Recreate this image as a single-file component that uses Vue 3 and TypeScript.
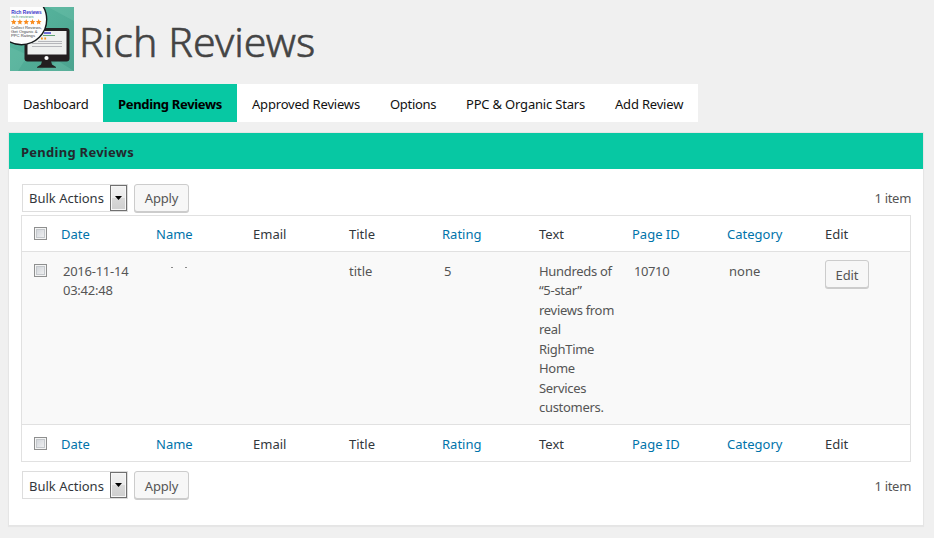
<script setup lang="ts">
interface Tab { label: string; active?: boolean; key: string }
interface Column { label: string; key: string; sortable?: boolean }

const tabs: Tab[] = [
  { label: 'Dashboard', key: 'dashboard' },
  { label: 'Pending Reviews', key: 'pending', active: true },
  { label: 'Approved Reviews', key: 'approved' },
  { label: 'Options', key: 'options' },
  { label: 'PPC & Organic Stars', key: 'ppc' },
  { label: 'Add Review', key: 'add' },
]
const columns: Column[] = [
  { label: 'Date', key: 'date', sortable: true },
  { label: 'Name', key: 'name', sortable: true },
  { label: 'Email', key: 'email' },
  { label: 'Title', key: 'title' },
  { label: 'Rating', key: 'rating', sortable: true },
  { label: 'Text', key: 'text' },
  { label: 'Page ID', key: 'page', sortable: true },
  { label: 'Category', key: 'category', sortable: true },
  { label: 'Edit', key: 'edit' },
]
const sections = ['top', 'bottom'] as const
const starXs = [3.7, 9.9, 16.2, 22.5, 28.7]
</script>

<template>
  <div class="page">
    <header class="brand">
      <svg class="logo" width="64" height="64" viewBox="0 0 64 64">
        <defs>
          <linearGradient id="bg" x1="0" y1="0" x2="1" y2="1">
            <stop offset="0" stop-color="#59b8a0" />
            <stop offset="1" stop-color="#4ba38f" />
          </linearGradient>
          <clipPath id="frame"><rect width="64" height="64" /></clipPath>
        </defs>
        <g clip-path="url(#frame)">
          <rect width="64" height="64" fill="url(#bg)" />
          <path d="M38 0L64 14V0ZM0 40L18 48L8 64H0ZM28 64L48 54L64 64Z" fill="#72c6b0" opacity=".35" />
          <rect x="14.500" y="21" width="45" height="33.500" rx="3" fill="#231f20" />
          <rect x="17.500" y="24" width="39" height="23.500" fill="#eef0ef" />
          <path d="M32 54h9l1 3.500 4 2.500v.7H27v-.7l4-2.500z" fill="#231f20" />
          <circle cx="36.500" cy="51" r="2.100" fill="#fff" />
          <path d="M34 26h7" stroke="#2b28c8" stroke-width="1.300" />
          <path d="M33 28.500h12" stroke="#62a575" stroke-width="1" />
          <path d="M31 31.500h1.800m1.500 0h1.800" stroke="#f7941d" stroke-width="1.800" />
          <path d="M28 34.500h24M22 36.500h30M22 39.500h30" stroke="#aeb0b4" stroke-width=".9" />
          <circle cx="11.500" cy="12.500" r="25.200" fill="#fdfdfd" stroke="#15191b" stroke-width="1.400" />
          <text x="1.200" y="7" class="logo-name" textLength="30.500" lengthAdjust="spacingAndGlyphs">Rich Reviews</text>
          <text x="1.500" y="10.900" class="logo-sub" textLength="22" lengthAdjust="spacingAndGlyphs">rich reviews</text>
          <path
            v-for="x in starXs"
            :key="x"
            :transform="`translate(${x} 14.800)`"
            d="M0-2.700L.8-.9 2.800-.7 1.300.7 1.700 2.600 0 1.600-1.700 2.600-1.300.7-2.800-.7-.8-.9Z"
            fill="#f98b1c"
          />
          <text x="1" y="21.500" class="logo-copy" textLength="31" lengthAdjust="spacingAndGlyphs">Collect Reviews,</text>
          <text x="1" y="25.600" class="logo-copy" textLength="26.500" lengthAdjust="spacingAndGlyphs">Get Organic &amp;</text>
          <text x="1" y="29.700" class="logo-copy" textLength="24" lengthAdjust="spacingAndGlyphs">PPC Ratings</text>
        </g>
      </svg>
      <h1>Rich Reviews</h1>
    </header>

    <nav class="tabs">
      <a v-for="t in tabs" :key="t.key" class="tab" :class="['tab-' + t.key, { active: t.active }]">{{ t.label }}</a>
    </nav>

    <section class="panel">
      <h2>Pending Reviews</h2>
      <div class="panel-body">
        <template v-for="s in sections" :key="s">
          <div class="table-nav" :class="s">
            <div class="select">
              <span class="select-label">Bulk Actions</span>
              <span class="select-arrow"><svg width="7" height="4" viewBox="0 0 7 4"><path d="M0 0h7L3.500 4z" /></svg></span>
            </div>
            <button class="button apply">Apply</button>
            <span class="count">1 item</span>
          </div>

          <div v-if="s === 'top'" class="table">
            <div class="row head">
              <span class="check"></span>
              <span v-for="c in columns" :key="c.key" :class="{ link: c.sortable }">{{ c.label }}</span>
            </div>
            <div class="row data">
              <span class="check"></span>
              <span class="inset date">2016-11-14<br />03:42:48</span>
              <span class="name"><svg width="20" height="4" viewBox="0 0 20 4"><path d="M0 .5h2M14 .5h2" stroke="#8a8a8a" /></svg></span>
              <span></span>
              <span>title</span>
              <span class="inset">5</span>
              <span class="review">Hundreds of<br />“5-star”<br />reviews from<br />real<br />RighTime<br />Home<br />Services<br />customers.</span>
              <span class="inset page-id">10710</span>
              <span class="inset">none</span>
              <span class="edit"><button class="button">Edit</button></span>
            </div>
            <div class="row foot">
              <span class="check"></span>
              <span v-for="c in columns" :key="c.key" :class="{ link: c.sortable }">{{ c.label }}</span>
            </div>
          </div>
        </template>
      </div>
    </section>
  </div>
</template>

<style>
body {
  background: #f0f0f0;
}
</style>

<style scoped>
.page {
  box-sizing: border-box;
  width: 934px;
  height: 538px;
  padding: 7px 10px 0 8px;
  overflow: hidden;
  background: #f0f0f0;
  font-family: "Noto Sans", sans-serif;
  font-size: 13px;
  color: #555;
}
.brand {
  display: flex;
  height: 77px;
  padding-left: 2px;
}
.logo { font-family: "Liberation Sans", sans-serif; }
.logo-name { font-size: 5px; font-weight: 700; fill: #3a34c9; }
.logo-sub { font-size: 4px; fill: #4f9a78; }
.logo-copy { font-size: 4.3px; fill: #3c4044; }
h1 {
  margin: 0 0 0 5px;
  font-size: 41px;
  font-weight: 300;
  line-height: 69px;
  letter-spacing: 0.1px;
  color: #444;
  -webkit-text-stroke: 0.6px #444;
  white-space: nowrap;
}
.tabs {
  display: flex;
  width: 690px;
  height: 38px;
  background: #fff;
}
.tab {
  padding-left: 15px;
  line-height: 40px;
  letter-spacing: -0.19px;
  color: #111;
  white-space: nowrap;
}
.tab-dashboard { width: 80px; }
.tab-pending { width: 119px; }
.tab-approved { width: 123px; }
.tab-options { width: 61px; letter-spacing: -0.3px; }
.tab-ppc { width: 134px; }
.tab.active {
  background: #07c8a3;
  color: #000;
  font-weight: 700;
  letter-spacing: -0.33px;
}
.panel {
  box-sizing: border-box;
  width: 916px;
  height: 394px;
  margin-top: 10px;
  border: 1px solid #e5e5e5;
  background: #fff;
  box-shadow: 0 1px 1px rgba(0, 0, 0, 0.04);
}
h2 {
  height: 36px;
  margin: 0;
  padding-left: 12px;
  background: #07c8a3;
  font-size: 13px;
  font-weight: 700;
  line-height: 38px;
  letter-spacing: 0.27px;
  color: #23282d;
}
.panel-body { padding: 14px 12px 0; }
.table-nav {
  display: flex;
  align-items: flex-start;
  height: 32px;
  padding-left: 1px;
}
.table-nav.bottom { margin-top: 8px; }
.select {
  box-sizing: border-box;
  display: flex;
  width: 106px;
  height: 28px;
  margin-top: 1px;
  border: 1px solid #ddd;
  color: #32373c;
}
.select-label {
  width: 87px;
  padding-left: 6px;
  box-sizing: border-box;
  line-height: 27px;
  white-space: nowrap;
}
.select-arrow {
  box-sizing: border-box;
  display: flex;
  align-items: center;
  justify-content: center;
  width: 17px;
  height: 26px;
  border: 1px solid #707070;
  background: linear-gradient(#f2f2f2 0%, #ebebeb 50%, #d9d9d9 51%, #cfcfcf 100%);
  box-shadow: inset 0 0 0 1px #f7f7f7;
}
.button {
  box-sizing: border-box;
  height: 28px;
  padding: 0;
  border: 1px solid #ccc;
  border-radius: 3px;
  background: #f7f7f7;
  box-shadow: 0 1px 0 #ccc;
  color: #555;
  font: inherit;
  letter-spacing: -0.1px;
  line-height: 27px;
}
.apply {
  width: 55px;
  margin-left: 6px;
  margin-top: 1px;
}
.apply { letter-spacing: -0.2px; }
.count {
  margin-left: auto;
  line-height: 30px;
  letter-spacing: -0.3px;
}
.bottom .select-label, .bottom .apply { line-height: 28px; }
.bottom .count { line-height: 32px; }
.table {
  box-sizing: border-box;
  width: 890px;
  height: 247px;
  border: 1px solid #e1e1e1;
}
.row {
  display: grid;
  grid-template-columns: 27px 95px 97px 96px 93px 97px 93px 95px 98px 1fr;
  padding-left: 12px;
}
.head, .foot {
  height: 35px;
  line-height: 37px;
  color: #32373c;
}
.foot { height: 36px; line-height: 38px; }
.link { color: #0073aa; }
.check {
  box-sizing: border-box;
  width: 13px;
  height: 13px;
  margin-top: 11px;
  border: 1px solid #8e8f8f;
  background: linear-gradient(135deg, #cbcfd5, #f6f6f6);
  box-shadow: inset 0 0 0 1px #f4f4f4, inset 0 0 0 2px #c4c8cc;
}
.foot .check { margin-top: 12px; }
.data {
  height: 162px;
  padding-top: 10px;
  border-top: 1px solid #e1e1e1;
  border-bottom: 1px solid #e1e1e1;
  background: #f9f9f9;
  line-height: 19.45px;
}
.data .check { margin-top: 2px; }
.inset { padding-left: 2px; }
.date { letter-spacing: -0.25px; }
.page-id { letter-spacing: -0.4px; }
.name {
  padding: 4px 0 0 15px;
  line-height: 0;
}
.review {
  letter-spacing: -0.3px;
  white-space: nowrap;
}
.edit { margin-top: -2px; }
.edit .button {
  display: block;
  width: 44px;
  line-height: 28px;
}
</style>
